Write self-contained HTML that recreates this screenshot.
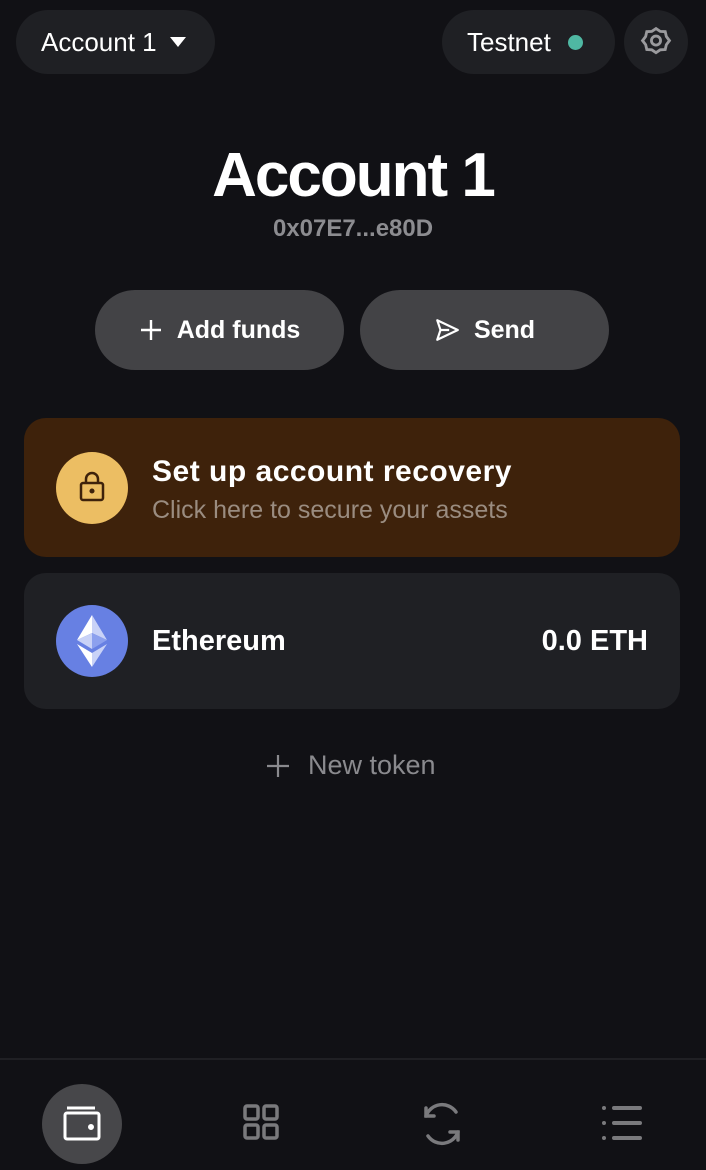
<!DOCTYPE html>
<html><head><style>
*{box-sizing:border-box;margin:0;padding:0}
body{width:706px;height:1170px;background:#111115;font-family:"Liberation Sans",sans-serif;color:#fff;position:relative;overflow:hidden}
.pill{position:absolute;background:#1f2024;border-radius:32px;display:flex;align-items:center}
.abs{position:absolute}
.btn{position:absolute;top:290px;width:249px;height:80px;border-radius:40px;background:#434346;display:flex;align-items:center;justify-content:center;font-size:25px;font-weight:bold;gap:14px}
</style></head><body>
<div class="pill" style="left:16px;top:10px;width:199px;height:64px;padding-left:25px;font-size:26px">Account 1 <svg width="18" height="12" style="margin-left:12px" viewBox="0 0 18 12"><path d="M1 1h16L9 11z" fill="#fff"/></svg></div>
<div class="pill" style="left:442px;top:10px;width:173px;height:64px;padding-left:25px;font-size:26px">Testnet <span style="width:15px;height:15px;border-radius:50%;background:#4fb8a3;margin-left:17px"></span></div>
<div class="pill" style="left:624px;top:10px;width:64px;height:64px;justify-content:center"><svg width="34" height="34" viewBox="0 0 24 24" fill="none" stroke="#9a9a9d" stroke-width="2"><path d="M12 2.5l3 2 3.5.2.8 3.4 2.2 2.9-2.2 2.9-.8 3.4-3.5.2-3 2-3-2-3.5-.2-.8-3.4L2.5 11l2.2-2.9.8-3.4 3.5-.2z"/><circle cx="12" cy="11" r="3.2"/></svg></div>
<div class="abs" style="left:0;width:706px;top:140px;text-align:center;font-size:62px;font-weight:bold;letter-spacing:-2px">Account 1</div>
<div class="abs" style="left:0;width:706px;top:215px;text-align:center;font-size:24px;font-weight:bold;color:#8c8c90">0x07E7...e80D</div>
<div class="btn" style="left:95px"><svg width="24" height="24" viewBox="0 0 24 24" stroke="#fff" stroke-width="2.4"><path d="M12 2v20M2 12h20"/></svg>Add funds</div>
<div class="btn" style="left:360px"><svg width="26" height="26" viewBox="0 0 24 24" fill="none" stroke="#fff" stroke-width="2" stroke-linejoin="round"><path d="M3 3l19 9-19 9 3-9zM6 12h8"/></svg>Send</div>
<div class="abs" style="left:24px;top:418px;width:656px;height:139px;background:#3e220b;border-radius:22px"></div>
<div class="abs" style="left:56px;top:452px;width:72px;height:72px;border-radius:50%;background:#ecbe63"></div>
<svg class="abs" style="left:78px;top:471px" width="28" height="32" viewBox="0 0 28 32" fill="none" stroke="#3e220b" stroke-width="2.5"><rect x="3" y="12" width="22" height="17" rx="2"/><path d="M8 12V8a6 6 0 0112 0v4"/><circle cx="14" cy="20" r="1.3" fill="#3e220b"/></svg>
<div class="abs" style="left:152px;top:455px;font-size:30px;font-weight:bold;letter-spacing:.5px">Set up account recovery</div>
<div class="abs" style="left:152px;top:496px;font-size:25px;color:#9a8c80">Click here to secure your assets</div>
<div class="abs" style="left:24px;top:573px;width:656px;height:136px;background:#1f2024;border-radius:22px"></div>
<div class="abs" style="left:56px;top:605px;width:72px;height:72px;border-radius:50%;background:#6780e3"></div>
<svg class="abs" style="left:74px;top:613px" width="36" height="56" viewBox="0 0 36 56"><path d="M18 2L3 27l15-7z" fill="#fff"/><path d="M18 2l15 25-15-7z" fill="#c9d2f7"/><path d="M3 27l15 9V20z" fill="#c9d2f7"/><path d="M33 27l-15 9V20z" fill="#8ca0ee"/><path d="M3 31l15 23V40z" fill="#fff"/><path d="M33 31L18 54V40z" fill="#c9d2f7"/></svg>
<div class="abs" style="left:152px;top:625px;font-size:29px;font-weight:bold">Ethereum</div>
<div class="abs" style="right:58px;top:625px;font-size:29px;font-weight:bold">0.0 ETH</div>
<div class="abs" style="left:266px;top:750px;font-size:27px;color:#8a8a8e;display:flex;align-items:center;gap:18px"><svg width="24" height="24" viewBox="0 0 24 24" stroke="#8a8a8e" stroke-width="2.2"><path d="M12 1v22M1 12h22"/></svg>New token</div>
<div class="abs" style="left:0;top:1058px;width:706px;height:2px;background:#202024"></div>
<div class="abs" style="left:42px;top:1084px;width:80px;height:80px;border-radius:50%;background:#47474a"></div>
<svg class="abs" style="left:62px;top:1104px" width="40" height="40" viewBox="0 0 40 40" fill="none" stroke="#fff" stroke-width="3"><rect x="3" y="9" width="34" height="26" rx="2"/><path d="M5 4h28"/><circle cx="29" cy="23" r="1.5" fill="#fff"/></svg>
<svg class="abs" style="left:243px;top:1104px" width="38" height="38" viewBox="0 0 38 38" fill="none" stroke="#7a7a7d" stroke-width="3.5"><rect x="2" y="2" width="13" height="13" rx="2"/><rect x="21" y="2" width="13" height="13" rx="2"/><rect x="2" y="21" width="13" height="13" rx="2"/><rect x="21" y="21" width="13" height="13" rx="2"/></svg>
<svg class="abs" style="left:420px;top:1102px" width="44" height="44" viewBox="0 0 44 44" fill="none" stroke="#7a7a7d" stroke-width="3.5" stroke-linecap="round"><path d="M6 14a17 17 0 0130-4"/><path d="M6 6v8h8"/><path d="M38 30a17 17 0 01-30 4"/><path d="M38 38v-8h-8"/></svg>
<svg class="abs" style="left:600px;top:1104px" width="44" height="38" viewBox="0 0 44 38" stroke="#7a7a7d" stroke-width="4" stroke-linecap="round"><path d="M4 4h0M4 19h0M4 34h0M14 4h26M14 19h26M14 34h26"/></svg>
</body></html>
